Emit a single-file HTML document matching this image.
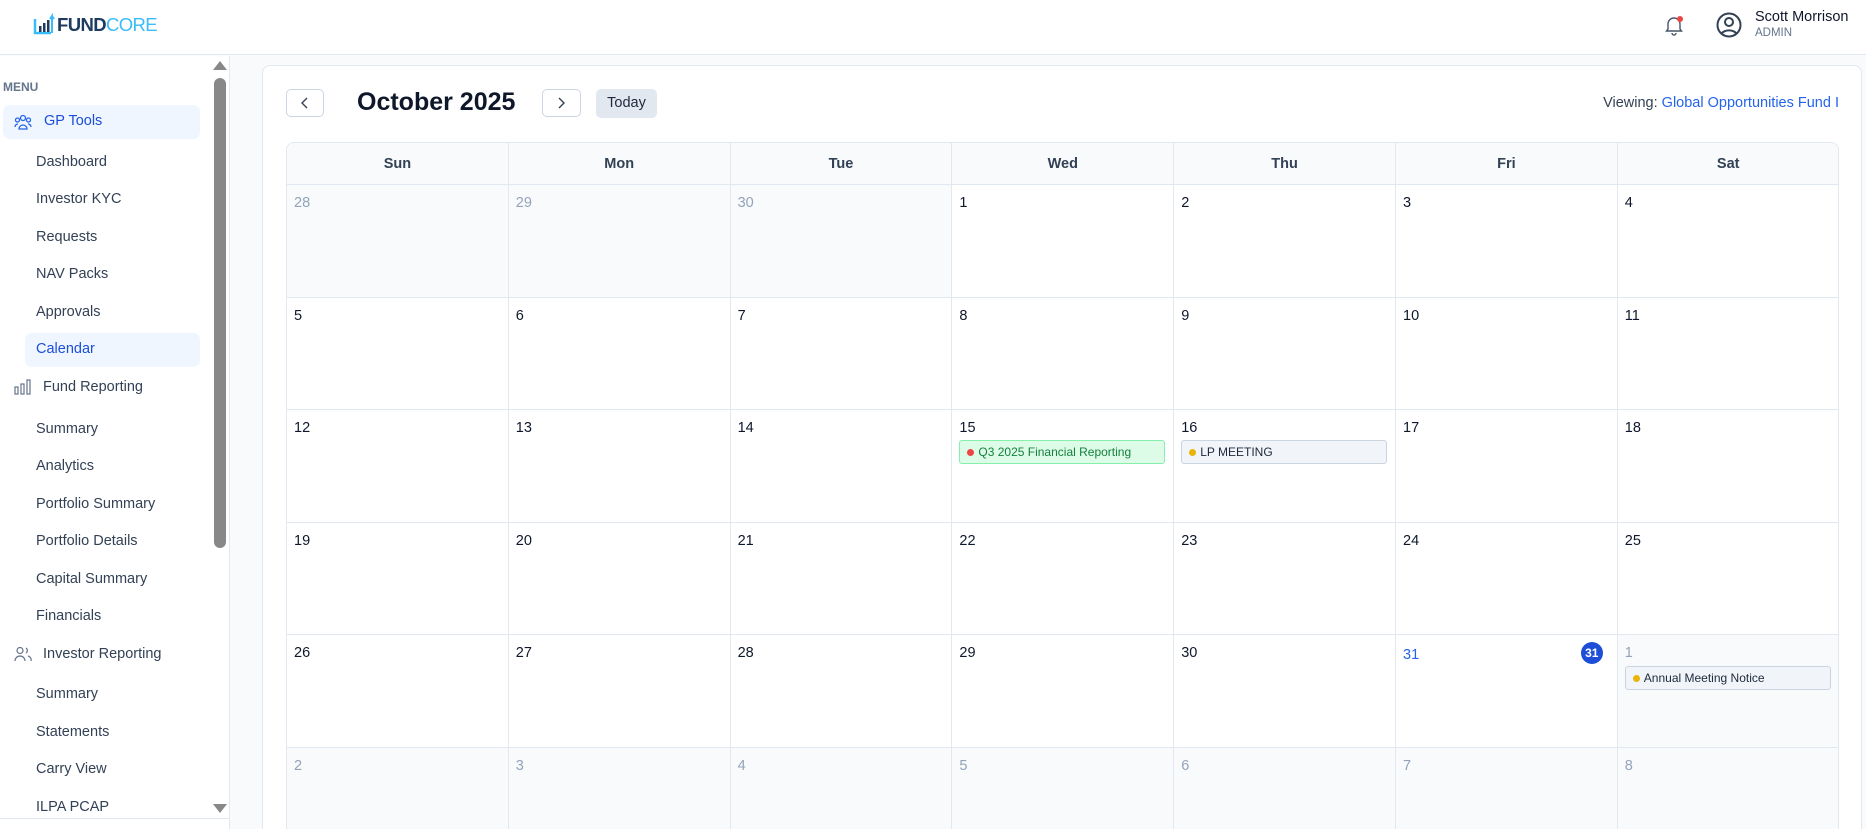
<!DOCTYPE html>
<html style="overflow:hidden;width:1866px;height:829px"><head><meta charset="utf-8"><style>
*{box-sizing:border-box;margin:0;padding:0}
body{width:1866px;height:829px;overflow:hidden;font-family:"Liberation Sans",sans-serif;background:#f8fafc;position:relative;color:#0f172a}
#wrap{position:absolute;left:0;top:0;width:1866px;height:829px;overflow:hidden}
.hdr{position:absolute;left:0;top:0;width:1866px;height:55px;background:#fff;border-bottom:1px solid #e2e8f0}
.side{position:absolute;left:0;top:56px;width:230px;height:773px;background:#fff;border-right:1px solid #e2e8f0}
.si{position:absolute;left:36px;font-size:14.5px;color:#334155}
.card{position:absolute;left:262px;top:65px;width:1600px;height:790px;background:#fff;border:1px solid #e2e8f0;border-radius:8px}
.btn{position:absolute;top:89px;height:28px;border:1px solid #cbd5e1;border-radius:5px;background:#fff}
.grid{position:absolute;left:286px;top:142px;width:1553px;height:720px;border:1px solid #e2e8f0;border-radius:8px;overflow:hidden}
.hc{position:absolute;top:0;height:42px;background:#f8fafc;border-right:1px solid #e2e8f0;border-bottom:1px solid #e2e8f0;font-size:14.5px;font-weight:bold;color:#334155;text-align:center;line-height:42px}
.c{position:absolute;border-right:1px solid #e2e8f0;border-bottom:1px solid #e2e8f0;background:#fff}
.c.o{background:#f8fafc}
.c span{position:absolute;left:7px;top:10px;font-size:14.5px;color:#0f172a}
.c.o span{color:#94a3b8}
.ev{position:absolute;left:7px;top:30px;width:206px;height:24px;border-radius:3px;font-size:12px;line-height:22px;padding-left:18px;border:1px solid #cbd5e1;background:#f1f5f9;color:#1e293b}
.ev:before{content:"";position:absolute;left:7px;top:8px;width:7px;height:7px;border-radius:50%;background:var(--d)}
</style></head><body><div id="wrap">
<div class="hdr">
 <svg style="position:absolute;left:32px;top:13px" width="24" height="24" viewBox="0 0 24 24"><path d="M3 6v14h16" fill="none" stroke="#38bdf8" stroke-width="2.5"/><rect x="7" y="13" width="2.5" height="6" fill="#1e3a5f"/><rect x="11" y="10" width="2.5" height="9" fill="#1e3a5f"/><rect x="15" y="7" width="2.5" height="12" fill="#1e3a5f"/><path d="M20 20V3l-2 3M20 3l2 3" fill="none" stroke="#38bdf8" stroke-width="2"/></svg>
 <div style="position:absolute;left:57px;top:14px;font-size:18.5px;font-weight:bold;letter-spacing:-0.6px"><span style="color:#1e3a5f">FUND</span><span style="color:#38bdf8;font-weight:normal">CORE</span></div>
 <svg style="position:absolute;left:1664px;top:14px" width="20" height="22" viewBox="0 0 20 22"><path d="M4 15V10a6 6 0 0 1 12 0v5l1.5 2h-15z M8 19a2 2 0 0 0 4 0" fill="none" stroke="#475569" stroke-width="1.4"/><circle cx="16" cy="5" r="3" fill="#ef4444"/></svg>
 <svg style="position:absolute;left:1715px;top:11px" width="28" height="28" viewBox="0 0 28 28"><circle cx="14" cy="14" r="11.5" fill="none" stroke="#334155" stroke-width="2"/><circle cx="14" cy="11" r="4" fill="none" stroke="#334155" stroke-width="2"/><path d="M6.5 22.5a9 7 0 0 1 15 0" fill="none" stroke="#334155" stroke-width="2"/></svg>
 <div style="position:absolute;left:1755px;top:9px;font-size:14.5px;color:#0f172a">Scott Morrison</div>
 <div style="position:absolute;left:1755px;top:27px;font-size:11.5px;color:#64748b">ADMIN</div>
</div>
<div class="side">
 <div style="position:absolute;left:3px;top:24px;font-size:12px;font-weight:bold;color:#64748b">MENU</div>
 <div style="position:absolute;left:3px;top:49px;width:197px;height:34px;background:#eff6ff;border-radius:7px"></div>
 <svg style="position:absolute;left:14px;top:57px" width="18" height="18" viewBox="0 0 18 18" fill="none" stroke="#2563eb" stroke-width="1.3"><circle cx="9" cy="5" r="2.5"/><circle cx="3.5" cy="7" r="2"/><circle cx="14.5" cy="7" r="2"/><path d="M5 16a4 4 0 0 1 8 0zM1 14a3 3 0 0 1 3-3M17 14a3 3 0 0 0-3-3"/></svg>
 <div class="si" style="left:44px;top:57px;color:#1d4ed8">GP Tools</div>
 <div class="si" style="top:98px">Dashboard</div>
 <div class="si" style="top:135px">Investor KYC</div>
 <div class="si" style="top:173px">Requests</div>
 <div class="si" style="top:210px">NAV Packs</div>
 <div class="si" style="top:248px">Approvals</div>
 <div style="position:absolute;left:25px;top:277px;width:175px;height:34px;background:#eff6ff;border-radius:7px"></div>
 <div class="si" style="top:285px;color:#1d4ed8">Calendar</div>
 <svg style="position:absolute;left:14px;top:323px" width="18" height="16" viewBox="0 0 18 16" fill="none" stroke="#64748b" stroke-width="1.2"><rect x="1" y="8" width="3" height="7"/><rect x="7" y="5" width="3" height="10"/><rect x="13" y="1" width="3" height="14"/></svg>
 <div class="si" style="left:43px;top:323px;color:#334155">Fund Reporting</div>
 <div class="si" style="top:365px">Summary</div>
 <div class="si" style="top:402px">Analytics</div>
 <div class="si" style="top:440px">Portfolio Summary</div>
 <div class="si" style="top:477px">Portfolio Details</div>
 <div class="si" style="top:515px">Capital Summary</div>
 <div class="si" style="top:552px">Financials</div>
 <svg style="position:absolute;left:14px;top:590px" width="18" height="16" viewBox="0 0 18 16" fill="none" stroke="#64748b" stroke-width="1.2"><circle cx="6" cy="4.5" r="3"/><path d="M1 15a5 5 0 0 1 10 0M12 2a3 3 0 0 1 0 5M14 10a4 4 0 0 1 3 5"/></svg>
 <div class="si" style="left:43px;top:590px">Investor Reporting</div>
 <div class="si" style="top:630px">Summary</div>
 <div class="si" style="top:668px">Statements</div>
 <div class="si" style="top:705px">Carry View</div>
 <div class="si" style="top:743px">ILPA PCAP</div>
 <div style="position:absolute;left:213px;top:5px;width:0;height:0;border-left:7px solid transparent;border-right:7px solid transparent;border-bottom:9px solid #888"></div>
 <div style="position:absolute;left:214px;top:22px;width:12px;height:470px;background:#888;border-radius:6px"></div>
 <div style="position:absolute;left:213px;top:748px;width:0;height:0;border-left:7px solid transparent;border-right:7px solid transparent;border-top:9px solid #888"></div>
 <div style="position:absolute;left:0;top:762px;width:230px;border-top:1px solid #e2e8f0"></div>
</div>
<div class="card"></div>
<div class="btn" style="left:286px;width:38px"><svg width="36" height="26" viewBox="0 0 36 26"><path d="M20 8l-5 5 5 5" fill="none" stroke="#334155" stroke-width="1.4"/></svg></div>
<div style="position:absolute;left:357px;top:88px;font-size:25px;font-weight:bold;color:#0f172a">October 2025</div>
<div class="btn" style="left:542px;width:39px"><svg width="37" height="26" viewBox="0 0 37 26"><path d="M16 8l5 5-5 5" fill="none" stroke="#334155" stroke-width="1.4"/></svg></div>
<div style="position:absolute;left:596px;top:89px;width:61px;height:29px;background:#e2e8f0;border-radius:5px;font-size:14.5px;color:#1e293b;text-align:center;line-height:29px">Today</div>
<div style="position:absolute;right:27px;top:95px;font-size:14.5px;color:#334155">Viewing: <span style="color:#2563eb">Global Opportunities Fund I</span></div>
<div class="grid" id="g"></div>
</div>
<script>
var g=document.getElementById('g');var W=221.8,H=112.5,d=['Sun','Mon','Tue','Wed','Thu','Fri','Sat'],h='';
for(var i=0;i<7;i++)h+='<div class="hc" style="left:'+(i*W)+'px;width:'+W+'px">'+d[i]+'</div>';
var nums=[[28,29,30,1,2,3,4],[5,6,7,8,9,10,11],[12,13,14,15,16,17,18],[19,20,21,22,23,24,25],[26,27,28,29,30,31,1],[2,3,4,5,6,7,8]];
for(var r=0;r<6;r++)for(var c=0;c<7;c++){var o=(r==0&&c<3)||(r==4&&c==6)||r==5;var ex='';var n=nums[r][c];var st='';
if(r==2&&c==3)ex='<div class="ev" style="--d:#ef4444;background:#dcfce7;border-color:#86efac;color:#15803d">Q3 2025 Financial Reporting</div>';
if(r==2&&c==4)ex='<div class="ev" style="--d:#eab308">LP MEETING</div>';
if(r==4&&c==6)ex='<div class="ev" style="--d:#eab308;top:31px">Annual Meeting Notice</div>';
if(r==4&&c==5){st=' style="color:#2563eb;top:12px"';ex='<div style="position:absolute;right:14px;top:7px;width:22px;height:22px;border-radius:50%;background:#1d4ed8;color:#fff;font-size:12px;font-weight:bold;text-align:center;line-height:22px">31</div>';}
h+='<div class="c'+(o?' o':'')+'" style="left:'+(c*W)+'px;top:'+(42+r*H)+'px;width:'+W+'px;height:'+H+'px"><span'+st+'>'+n+'</span>'+ex+'</div>';}
g.innerHTML=h;
</script>
</body></html>
